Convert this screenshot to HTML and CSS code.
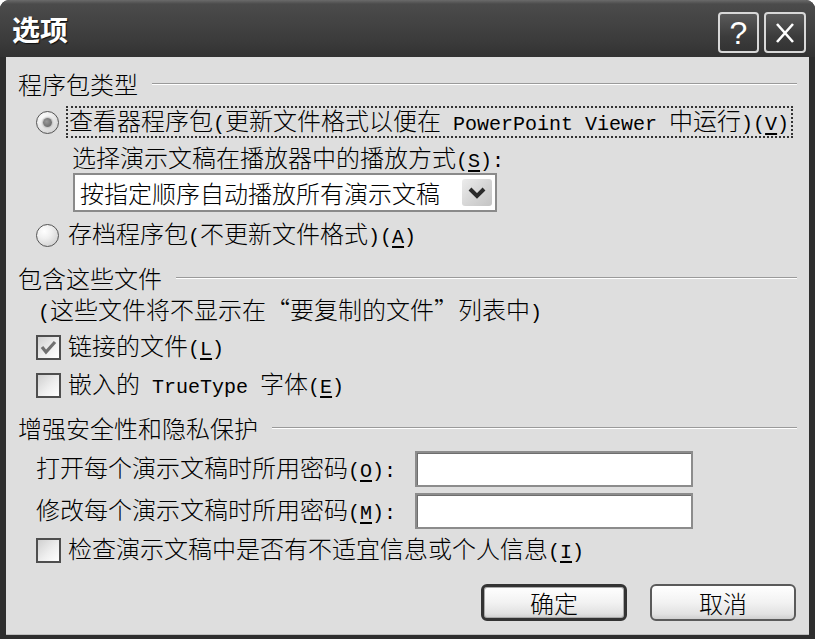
FILE: index.html
```html
<!DOCTYPE html>
<html lang="zh-CN">
<head>
    <meta charset="UTF-8">
    <title>选项</title>
    <link rel="stylesheet" href="styles.css">
</head>
<body>

    <div class="window">
        <div class="titlebar">
            <span class="title">选项</span>
            <div class="title-buttons">
                <span class="tb-btn help">?</span>
                <span class="tb-btn close">
                    <svg width="24" height="24" viewBox="0 0 24 24"><path d="M4 3 L20 21 M20 3 L4 21" stroke="#fff" stroke-width="2.6" fill="none"/></svg>
                </span>
            </div>
        </div>

        <div class="content">
            <div class="group-title first">程序包类型</div>

            <div class="opt r1">
                <span class="radio checked"></span>
                <span class="focus">查看器程序包<span class="en">(</span>更新文件格式以便在<span class="en"> PowerPoint Viewer </span>中运行<span class="en">)(<u>V</u>)</span></span>
            </div>
            <div class="sub">选择演示文稿在播放器中的播放方式<span class="en">(<u>S</u>):</span></div>
            <div class="combo">
                <span class="combo-text">按指定顺序自动播放所有演示文稿</span>
                <span class="combo-btn">
                    <svg width="30" height="27" viewBox="0 0 30 27"><polyline points="8,10 15,17 22,10" stroke="#2a2a2a" stroke-width="4" fill="none"/></svg>
                </span>
            </div>
            <div class="opt">
                <span class="radio"></span>
                <span>存档程序包<span class="en">(</span>不更新文件格式<span class="en">)(<u>A</u>)</span></span>
            </div>

            <div class="group-title">包含这些文件</div>
            <div class="note"><span class="en">(</span>这些文件将不显示在“要复制的文件”列表中<span class="en">)</span></div>
            <div class="opt cb">
                <span class="check checked">
                    <svg width="21" height="21" viewBox="0 0 21 21"><polyline points="4,10 8,15 17,5" stroke="#707070" stroke-width="3.2" fill="none"/></svg>
                </span>
                <span>链接的文件<span class="en">(<u>L</u>)</span></span>
            </div>
            <div class="opt cb">
                <span class="check"></span>
                <span>嵌入的<span class="en"> TrueType </span>字体<span class="en">(<u>E</u>)</span></span>
            </div>

            <div class="group-title">增强安全性和隐私保护</div>
            <div class="pw-row">
                <span class="pw-label">打开每个演示文稿时所用密码<span class="en">(<u>O</u>):</span></span>
                <span class="pw-input"></span>
            </div>
            <div class="pw-row second">
                <span class="pw-label">修改每个演示文稿时所用密码<span class="en">(<u>M</u>):</span></span>
                <span class="pw-input"></span>
            </div>
            <div class="opt cb last">
                <span class="check"></span>
                <span>检查演示文稿中是否有不适宜信息或个人信息<span class="en">(<u>I</u>)</span></span>
            </div>

            <div class="actions">
                <button class="btn default">确定</button>
                <button class="btn">取消</button>
            </div>
        </div>
    </div>

</body>
</html>
```

FILE: styles.css
```css
html, body {
    margin: 0;
    background-color: #fff;
}

body {
    font-family: "Noto Sans CJK SC", sans-serif;
    font-size: 24px;
    font-weight: 300;
    color: #000;
}

.window {
    width: 815px;
    height: 639px;
    box-sizing: border-box;
    display: flex;
    flex-direction: column;
    background-color: #2e2e2e;
    border-radius: 9px 9px 0 0;
    overflow: hidden;
}

.titlebar {
    height: 57px;
    flex: none;
    display: flex;
    align-items: flex-start;
    justify-content: space-between;
    background: linear-gradient(#6a6a6a 0, #4b4b4b 4px, #434343 40%, #3a3a3a 75%, #323232 100%);
}

.title {
    margin: 12px 0 0 12px;
    font-size: 28px;
    font-weight: bold;
    line-height: 34px;
    color: #fff;
    text-shadow: 1px 1px 1px #111;
}

.title-buttons {
    display: flex;
    gap: 5px;
    margin: 12px 9px 0 0;
}

.tb-btn {
    width: 41px;
    height: 41px;
    box-sizing: border-box;
    border: 2px solid #d8d8d8;
    border-radius: 4px;
    background: linear-gradient(#5a5a5a, #3c3c3c 60%, #333);
    display: flex;
    align-items: center;
    justify-content: center;
    color: #fff;
}

.tb-btn.close {
    width: 42px;
}

.tb-btn.help {
    font-family: "Liberation Sans", sans-serif;
    font-size: 32px;
    line-height: 1;
}

.content {
    flex: 1;
    margin: 0 6px 4px 6px;
    padding: 13px 12px 0 12px;
    background-color: #dedede;
    display: flex;
    flex-direction: column;
    border-bottom: 1px solid #bdbdbd;
}

.en {
    font-family: "Liberation Mono", monospace;
    font-size: 20px;
    font-weight: normal;
}

u {
    text-underline-offset: 3px;
}

.group-title {
    display: flex;
    align-items: center;
    height: 28px;
    line-height: 28px;
    margin-top: 15px;
}

.group-title.first {
    margin-top: 0;
}

.group-title::after {
    content: "";
    flex: 1;
    margin-left: 14px;
    border-top: 1px solid #9a9a9a;
    border-bottom: 1px solid #fff;
}

.opt {
    display: flex;
    align-items: center;
    height: 28px;
    line-height: 28px;
    margin-top: 9px;
    margin-left: 18px;
    white-space: nowrap;
}

.opt.r1 {
    margin-top: 10px;
}

.opt.cb {
    margin-top: 10px;
}

.opt.last {
    margin-top: 7px;
}

.radio {
    width: 23px;
    height: 23px;
    flex: none;
    box-sizing: border-box;
    border-radius: 50%;
    border: 1px solid #555;
    background: radial-gradient(circle at 35% 30%, #fff 0, #f0f0f0 35%, #c6c6c6 100%);
    margin-right: 9px;
    display: flex;
    align-items: center;
    justify-content: center;
}

.radio.checked::after {
    content: "";
    width: 9px;
    height: 9px;
    border-radius: 50%;
    background: radial-gradient(circle at 40% 40%, #9a9a9a, #5c5c5c);
    box-shadow: 0 0 2px 1px #bbb;
}

.focus {
    margin-left: -2px;
    padding: 0 2px 0 1px;
    border: 2px dotted #333;
    line-height: 23px;
}

.sub {
    height: 28px;
    line-height: 28px;
    margin-top: 7px;
    margin-left: 54px;
}

.combo {
    width: 424px;
    height: 39px;
    box-sizing: border-box;
    margin-top: 2px;
    margin-left: 55px;
    border: 2px solid #8a8a8a;
    background-color: #fff;
    display: flex;
    align-items: center;
    justify-content: space-between;
    padding: 0 3px 0 5px;
}

.combo-text {
    line-height: 28px;
}

.combo-btn {
    width: 30px;
    height: 27px;
    border-radius: 3px;
    background: linear-gradient(135deg, #ececec, #d2d2d2 60%, #c4c4c4);
    display: flex;
}

.note {
    height: 28px;
    line-height: 28px;
    margin-top: 3px;
    margin-left: 20px;
}

.check {
    width: 25px;
    height: 25px;
    flex: none;
    box-sizing: border-box;
    border: 2px solid #4e4e4e;
    background: linear-gradient(135deg, #d0d0d0, #eeeeee 55%, #fff);
    margin-right: 7px;
    display: flex;
    align-items: center;
    justify-content: center;
}

.pw-row {
    display: flex;
    align-items: center;
    height: 36px;
    margin-top: 9px;
    margin-left: 18px;
}

.pw-row.second {
    margin-top: 6px;
}

.pw-label {
    width: 379px;
    line-height: 28px;
    white-space: nowrap;
}

.pw-input {
    width: 278px;
    height: 36px;
    box-sizing: border-box;
    border: 2px solid #8c8c8c;
    box-shadow: inset 1px 1px 0 #6e6e6e;
    background-color: #fff;
}

.actions {
    display: flex;
    justify-content: flex-end;
    gap: 23px;
    margin-top: 20px;
    padding-right: 1px;
}

.btn {
    width: 146px;
    height: 37px;
    box-sizing: border-box;
    font-family: "Noto Sans CJK SC", sans-serif;
    font-size: 24px;
    font-weight: 300;
    line-height: 28px;
    color: #000;
    padding: 0;
    border: 2px solid #5a5a5a;
    border-radius: 6px;
    background: linear-gradient(#ffffff, #f2f2f2 50%, #e2e2e2 85%, #cfcfcf);
}

.btn.default {
    border: 3px solid #333;
    box-shadow: inset 0 0 0 1px #aaa;
}
```
